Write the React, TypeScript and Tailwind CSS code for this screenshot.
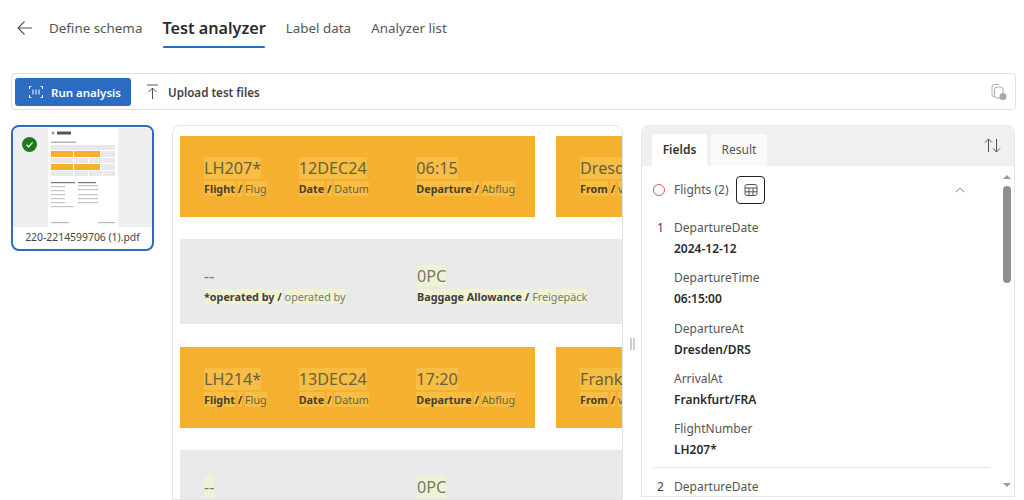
import { ChevronUp } from "lucide-react";

const font = { fontFamily: '"Noto Sans", sans-serif' };

// Highlighted word in the document preview
function Hl({ children, bold }: { children: string; bold?: boolean }) {
  return (
    <span className={`bg-[#fff7a0]/20 ${bold ? "font-bold text-[#4a4025]" : "text-[#6b5f3a]"}`}>{children}</span>
  );
}

function HlGray({ children, bold, plain }: { children: string; bold?: boolean; plain?: boolean }) {
  return (
    <span className={`${plain ? "" : "bg-[#f0f2d4]"} ${bold ? "font-bold text-[#3f3f3f]" : "text-[#777777]"}`}>{children}</span>
  );
}

function OrangeCard({ flight, date, time, place }: { flight: string; date: string; time: string; place: string }) {
  const cols = [
    { value: flight, label: "Flight", de: "Flug", width: "w-[95px]" },
    { value: date, label: "Date", de: "Datum", width: "w-[118px]" },
    { value: time, label: "Departure", de: "Abflug", width: "w-[119px]" },
  ];
  return (
    <div className="flex gap-[21px] shrink-0">
      <div className="flex w-[355px] h-[81px] shrink-0 bg-[#f6b02f] pl-6 pt-[21px]">
        {cols.map((c) => (
          <div key={c.label} className={c.width}>
            <div className="text-[16.2px] leading-[22px] text-[#5f5128]">
              <Hl>{c.value}</Hl>
            </div>
            <div className="mt-[1px] text-[10.8px] leading-[17px] whitespace-nowrap">
              <Hl bold>{c.label}</Hl> <Hl bold>/</Hl> <Hl>{c.de}</Hl>
            </div>
          </div>
        ))}
      </div>
      <div className="w-[200px] h-[81px] shrink-0 bg-[#f6b02f] pl-6 pt-[21px]">
        <div className="text-[16.2px] leading-[22px]">
          <Hl>{place}</Hl>
        </div>
        <div className="mt-[1px] text-[10.8px] leading-[17px] whitespace-nowrap">
          <Hl bold>From</Hl> <Hl bold>/</Hl> <Hl>von</Hl>
        </div>
      </div>
    </div>
  );
}

function GrayCard({ plainDash }: { plainDash?: boolean }) {
  return (
    <div className="flex w-[600px] h-[85px] shrink-0 mb-[1px] bg-[#e9e9e9] pl-6 pt-[26px]">
      <div className="w-[213px]">
        <div className="text-[16.2px] leading-[22px]">
          <HlGray plain={plainDash}>--</HlGray>
        </div>
        <div className="mt-[1px] text-[10.8px] leading-[17px] whitespace-nowrap">
          <HlGray bold>*operated by /</HlGray> <HlGray>operated by</HlGray>
        </div>
      </div>
      <div>
        <div className="text-[16.2px] leading-[22px]">
          <HlGray>0PC</HlGray>
        </div>
        <div className="mt-[1px] text-[10.8px] leading-[17px] whitespace-nowrap">
          <HlGray bold>Baggage Allowance /</HlGray> <HlGray>Freigepäck</HlGray>
        </div>
      </div>
    </div>
  );
}

function Field({ n, label, value }: { n?: number; label: string; value?: string }) {
  return (
    <div className="flex">
      <div className="w-[32px] pl-[15px] text-[12px] leading-[20px] text-[#444444]">{n}</div>
      <div>
        <div className="text-[12px] leading-[20px] text-[#555555]">{label}</div>
        {value && <div className="mt-[1px] text-[12px] leading-[20px] font-semibold text-[#2b2b2b]">{value}</div>}
      </div>
    </div>
  );
}

// Miniature of the PDF page
function Thumb() {
  const grayRow = (y: number) => (
    <>
      <rect x="3" y={y} width="22" height="5" fill="#e8e8e8" />
      <rect x="26" y={y} width="14" height="5" fill="#e8e8e8" />
      <rect x="41" y={y} width="13" height="5" fill="#e8e8e8" />
      <rect x="55" y={y} width="12" height="5" fill="#e8e8e8" />
    </>
  );
  const orangeRow = (y: number) => (
    <>
      <rect x="3" y={y} width="22" height="6" fill="#f6b02f" />
      <rect x="26" y={y} width="26" height="6" fill="#f6b02f" />
      <rect x="53" y={y} width="14" height="6" fill="#e8e8e8" />
    </>
  );
  return (
    <svg width="70" height="99" viewBox="0 0 70 99" className="shrink-0 blur-[0.5px]">
      <rect width="70" height="99" fill="#ffffff" />
      <circle cx="5" cy="5" r="1.5" fill="#9a9a9a" />
      <rect x="9" y="3.5" width="14" height="3" fill="#555555" />
      <rect x="3" y="13.5" width="25" height="1.5" fill="#b5b5b5" />
      <rect x="3" y="17" width="64" height="5" fill="#e8e8e8" />
      {orangeRow(23)}
      {grayRow(30)}
      {orangeRow(36)}
      {grayRow(43)}
      <rect x="3" y="54" width="24" height="1.2" fill="#777777" />
      <rect x="30" y="54" width="18" height="1.2" fill="#777777" />
      {[58, 62, 66, 70, 74].map((y) => (
        <rect key={y} x="3" y={y} width="14" height="1.2" fill="#c4c4c4" />
      ))}
      {[57, 61, 66, 70, 74].map((y) => (
        <rect key={y} x="30" y={y} width="20" height="1.2" fill="#c4c4c4" />
      ))}
      <rect x="3" y="78" width="22" height="1.2" fill="#c4c4c4" />
      <rect x="3" y="94" width="18" height="1.2" fill="#bbbbbb" />
      <rect x="50" y="94" width="17" height="1.2" fill="#bbbbbb" />
    </svg>
  );
}

export default function App() {
  return (
    <div style={font} className="w-[1024px] h-[500px] overflow-hidden bg-white flex flex-col">
      {/* Top tabs */}
      <div className="flex h-[73px] shrink-0 pl-[17px] pt-[19px]">
        <svg width="16" height="18" viewBox="0 0 16 18" fill="none" stroke="#555555" strokeWidth="1.1" className="mr-[16px]">
          <path d="M15 9H1M7.5 2.5 1 9l6.5 6.5" />
        </svg>
        <span className="text-[13.4px] leading-[18px] text-[#555555] mr-[20px] whitespace-nowrap">Define schema</span>
        <div className="flex flex-col mr-[20px]">
          <span className="text-[16.2px] leading-[18px] font-semibold text-[#2b2b2b] whitespace-nowrap">Test analyzer</span>
          <div className="mt-[9px] mx-[1px] h-[2px] bg-[#2b6cc0] rounded-full" />
        </div>
        <span className="text-[13.4px] leading-[18px] text-[#555555] mr-[20px] whitespace-nowrap">Label data</span>
        <span className="text-[13.4px] leading-[18px] text-[#555555] whitespace-nowrap">Analyzer list</span>
      </div>

      {/* Toolbar */}
      <div className="ml-[11px] mr-[8px] h-[37px] shrink-0 flex items-center border border-[#e0e0e0] rounded-[4px] pl-[3px] pr-[8px]">
        <button className="flex items-center w-[116px] h-[28px] pl-[13px] gap-[7px] bg-[#2b6cc0] rounded-[3px] text-white text-[11.5px] font-semibold">
          <svg width="16" height="14" viewBox="0 0 16 14" fill="none" stroke="#ffffff" strokeWidth="1">
            <path d="M3.5 1.5h-2v2.5M12.5 1.5h2v2.5M3.5 12.5h-2V10M12.5 12.5h2V10M5 4.5v5M8 4.5v5M11 4.5v5" />
          </svg>
          <span className="pt-[2px]">Run analysis</span>
        </button>
        <svg width="13" height="16" viewBox="0 0 13 16" fill="none" stroke="#555555" strokeWidth="1" className="ml-[15px]">
          <path d="M1 1h11M6.5 15V4M2.5 8l4-4 4 4" />
        </svg>
        <span className="ml-[9px] pt-[2px] text-[11.6px] font-semibold text-[#444444] whitespace-nowrap">Upload test files</span>
        <svg width="16" height="18" viewBox="0 0 16 18" fill="none" stroke="#a8a8a8" strokeWidth="1" className="ml-auto">
          <path d="M1 10.5V4a2.5 2.5 0 0 1 2.5-2.5H8M3 14a2.5 2.5 0 0 1-2-3" />
          <rect x="3.5" y="4" width="8.5" height="11" rx="2.5" />
          <circle cx="12" cy="13.5" r="3.5" fill="#a8a8a8" stroke="none" />
        </svg>
      </div>

      {/* Main area */}
      <div className="flex flex-1 min-h-0 pt-[15px] pl-[11px]">
        <div className="w-[143px] h-[126px] shrink-0 border-[2px] border-[#2b6cc0] rounded-[8px] overflow-hidden flex flex-col">
          <div className="relative h-[99px] mt-[1px] bg-[#efefef] flex justify-center">
            <Thumb />
            <div className="absolute left-[9px] top-[9px] w-[15px] h-[15px] rounded-full bg-[#1f7a1f] flex items-center justify-center">
              <svg width="9" height="9" viewBox="0 0 9 9" fill="none" stroke="#ffffff" strokeWidth="1.2">
                <path d="M1.5 4.8 3.6 6.8 7.6 2.4" />
              </svg>
            </div>
          </div>
          <div className="flex-1 flex items-center justify-center text-[10.4px] text-[#444444] whitespace-nowrap">
            220-2214599706 (1).pdf
          </div>
        </div>

        <div className="ml-[18px] w-[451px] h-[375px] shrink-0 border border-[#e3e3e3] rounded-t-[8px] overflow-hidden pl-[7px] pt-[10px] flex flex-col gap-[22px]">
          <OrangeCard flight="LH207*" date="12DEC24" time="06:15" place="Dresden" />
          <GrayCard plainDash />
          <OrangeCard flight="LH214*" date="13DEC24" time="17:20" place="Frankfurt" />
          <GrayCard />
        </div>

        <div className="w-[18px] shrink-0 flex justify-center gap-[1px] pt-[213px]">
          <div className="w-[2px] h-[12px] bg-[#cfcfcf]" />
          <div className="w-[2px] h-[12px] bg-[#cfcfcf]" />
        </div>

        {/* Right panel */}
        <div className="w-[374px] h-[372px] shrink-0 border border-[#e8e8e8] rounded-t-[8px] overflow-hidden flex flex-col">
          <div className="h-[40px] shrink-0 bg-[#f0f0f0] flex items-end pl-[10px] gap-[4px] relative">
            <div className="w-[55px] h-[32px] bg-white rounded-t-[4px] flex items-center justify-center text-[12px] font-semibold text-[#333333]">
              Fields
            </div>
            <div className="w-[56px] h-[32px] bg-[#fafafa] rounded-t-[4px] flex items-center justify-center text-[12px] text-[#555555]">
              Result
            </div>
            <svg width="17" height="15" viewBox="0 0 17 15" fill="none" stroke="#555555" strokeWidth="1" className="absolute right-[13px] top-[12px]">
              <path d="M4.5 14V1M1 4.5 4.5 1 8 4.5M12.5 1v13M9 10.5l3.5 3.5 3.5-3.5" />
            </svg>
          </div>
          <div className="flex-1 min-h-0 flex overflow-hidden">
            <div className="flex-1 min-w-0">
              <div className="flex items-center h-[28px] mt-[10px] pl-[11px]">
                <div className="w-[12px] h-[12px] rounded-full border border-[#d9604c]" />
                <span className="ml-[9px] text-[12px] text-[#555555] whitespace-nowrap">Flights (2)</span>
                <div className="ml-[8px] w-[29px] h-[28px] border-[1.5px] border-[#222222] rounded-[4px] flex items-center justify-center">
                  <svg width="14" height="14" viewBox="0 0 14 14" fill="none" stroke="#555555" strokeWidth="1">
                    <rect x="1" y="1.5" width="12" height="11" rx="2" />
                    <path d="M1 5h12M1 8.8h12M5 5v7.5M9 5v7.5" />
                  </svg>
                </div>
                <ChevronUp size={16} strokeWidth={1} className="ml-[187px] text-[#555555]" />
              </div>
              <div className="mt-[14px] flex flex-col gap-[9.25px]">
                <Field n={1} label="DepartureDate" value="2024-12-12" />
                <Field label="DepartureTime" value="06:15:00" />
                <Field label="DepartureAt" value="Dresden/DRS" />
                <Field label="ArrivalAt" value="Frankfurt/FRA" />
                <Field label="FlightNumber" value="LH207*" />
              </div>
              <div className="ml-[11px] mt-[7px] mb-[9px] w-[337px] h-px bg-[#e6e6e6]" />
              <Field n={2} label="DepartureDate" />
            </div>
            <div className="w-[14px] shrink-0 flex flex-col items-center pt-[9px]">
              <div className="w-0 h-0 border-x-[4px] border-x-transparent border-b-[4px] border-b-[#9a9a9a]" />
              <div className="mt-[7px] w-[8px] h-[97px] rounded-full bg-[#8f8f8f]" />
              <div className="mt-auto mb-[9px] w-0 h-0 border-x-[4px] border-x-transparent border-t-[4px] border-t-[#9a9a9a]" />
            </div>
          </div>
        </div>
      </div>
    </div>
  );
}
